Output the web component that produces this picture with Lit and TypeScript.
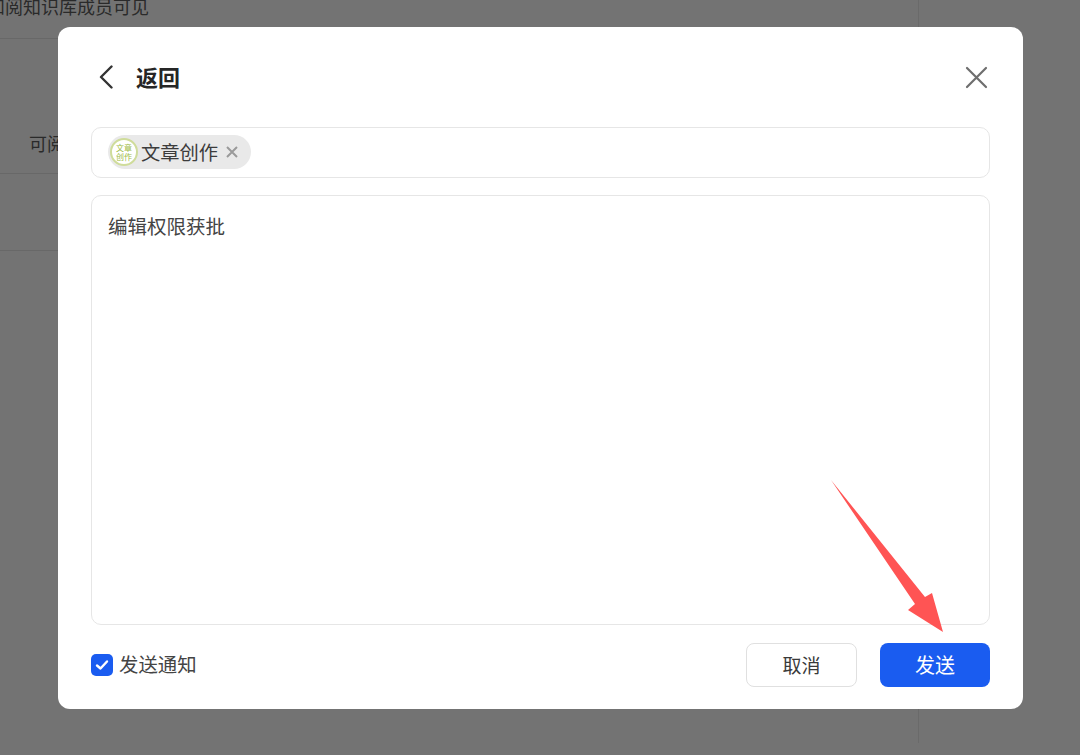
import { LitElement, html, css } from "lit";
import { customElement } from "lit/decorators.js";

@customElement("app-root")
export class AppRoot extends LitElement {
  static styles = css`
    :host { display: block; width: 1080px; height: 755px; position: relative; overflow: hidden; background: #737373;
      font-family: "Noto Sans CJK SC", "Liberation Sans", sans-serif; color: #3a3a3a; }
    * { box-sizing: border-box; }
    .page { width: 919px; height: 755px; border-right: 1px solid #6a6a6a; color: #2a2a2a; font-size: 18px; }
    .row { border-bottom: 1px solid #686868; white-space: nowrap; overflow: hidden; }
    .r1 { margin-top: -12px; line-height: 36px; height: 51px; }
    .r1 span { display: block; margin-left: -13px; }
    .r2 { height: 135px; padding: 86px 0 0 29px; line-height: 36px; }
    .r3 { height: 77px; }
    .modal { position: absolute; left: 58px; top: 27px; width: 965px; height: 682px; background: #fff; border-radius: 12px;
      padding: 0 33px; display: flex; flex-direction: column; }
    .head { height: 100px; display: flex; align-items: center; }
    .back { width: 45px; height: 24px; display: block; flex: none; margin-top: -1px; }
    .title { font-size: 22px; font-weight: 700; color: #262626; flex: 1; line-height: 30px; margin-top: -3px; }
    .close { width: 24px; height: 24px; margin: -1px 2px 0 0; display: block; }
    .tags { height: 51px; border: 1px solid #e6e6e6; border-radius: 10px; padding: 0 16px; display: flex; align-items: center; }
    .chip { height: 34px; width: 143px; border-radius: 17px; background: #e9e9e9; display: flex; align-items: center; padding-left: 2px; margin-top: -1px; }
    .avatar { width: 28px; height: 28px; border-radius: 50%; background: #fff; border: 2px solid #cfdc9b; flex: none;
      display: flex; align-items: center; justify-content: center; text-align: center; font-size: 8px; line-height: 9px; color: #9dbb45; }
    .chip-label { font-size: 19.3px; margin-left: 3px; line-height: 26px; color: #3c3c3c; white-space: nowrap; margin-top: -1px; }
    .x { width: 14px; height: 14px; margin-left: 7px; display: block; flex: none; }
    .text { height: 430px; margin-top: 17px; border: 1px solid #e6e6e6; border-radius: 10px; padding: 16px 16px; font-size: 19.5px; line-height: 28px; color: #444; }
    .foot { margin-top: 18px; display: flex; align-items: center; height: 44px; }
    .check { width: 22px; height: 22px; border-radius: 5px; background: #1a5cf0; display: flex; align-items: center; justify-content: center; flex: none; }
    .check svg { display: block; }
    .check-label { font-size: 19.4px; margin-left: 6px; flex: 1; color: #444; line-height: 26px; margin-top: -2px; }
    .btn { width: 111px; height: 44px; border-radius: 8px; font-size: 19px; display: flex; align-items: center; justify-content: center; padding-bottom: 2px; }
    .cancel { background: #fff; border: 1px solid #e0e0e0; color: #3a3a3a; }
    .send { width: 110px; margin-left: 23px; background: #1a5cf0; color: #fff; font-size: 20px; }
    .arrow { position: absolute; left: 820px; top: 470px; width: 140px; height: 175px; display: block; }
  `;

  render() {
    return html`
      <div class="page">
        <div class="row r1"><span>和阅知识库成员可见</span></div>
        <div class="row r2">可阅读</div>
        <div class="row r3"></div>
      </div>
      <div class="modal">
        <div class="head">
          <svg class="back" viewBox="0 0 45 24"><path d="M20.5 1.5 L10 12 L20.5 22.5" fill="none" stroke="#333" stroke-width="2.4" stroke-linecap="round" stroke-linejoin="round"/></svg>
          <div class="title">返回</div>
          <svg class="close" viewBox="0 0 24 24"><path d="M3 3 L22 22 M22 3 L3 22" fill="none" stroke="#6e6e6e" stroke-width="2.2" stroke-linecap="round"/></svg>
        </div>
        <div class="tags">
          <div class="chip">
            <div class="avatar"><span>文章<br />创作</span></div>
            <span class="chip-label">文章创作</span>
            <svg class="x" viewBox="0 0 14 14"><path d="M2 2 L12 12 M12 2 L2 12" fill="none" stroke="#9a9a9a" stroke-width="2"/></svg>
          </div>
        </div>
        <div class="text">编辑权限获批</div>
        <div class="foot">
          <div class="check"><svg width="14" height="12" viewBox="0 0 14 12"><path d="M2 6.5 L5.5 9.5 L12 2.5" fill="none" stroke="#fff" stroke-width="2.4" stroke-linecap="round" stroke-linejoin="round"/></svg></div>
          <div class="check-label">发送通知</div>
          <div class="btn cancel">取消</div>
          <div class="btn send">发送</div>
        </div>
      </div>
      <svg class="arrow" viewBox="820 470 140 175"><polygon points="831,480 925,597 932,593 943,632 908,610 915,604" fill="#ff5454"/></svg>
    `;
  }
}
